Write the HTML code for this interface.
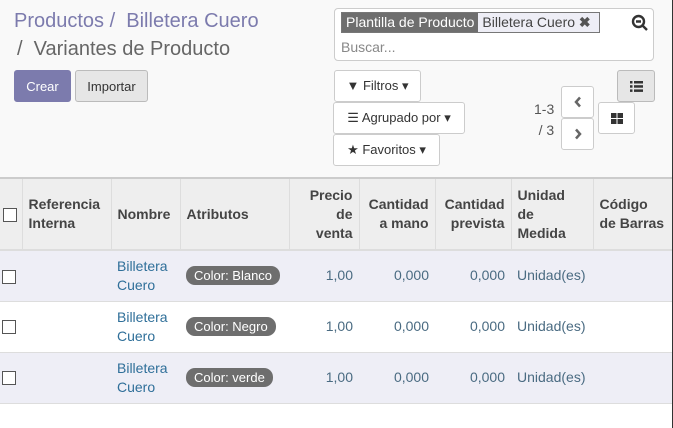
<!DOCTYPE html>
<html><head><meta charset="utf-8"><style>
*{box-sizing:border-box;margin:0;padding:0}
body{width:673px;height:428px;background:#fff;font-family:"Liberation Sans",Arial,sans-serif;font-size:13px;color:#4c4c4c;position:relative;overflow:hidden}
.cp{position:absolute;left:0;top:0;width:673px;height:177px;background:#f9f9f9}
.a{position:absolute}
.bc{font-size:20px;color:#7c7bad;left:14px;top:10px}
.bc2{font-size:20px;color:#666;left:17px;top:38px}
.btn{position:absolute;border:1px solid #ccc;border-radius:3px;background:#fff;font-size:13px;color:#333;display:flex;align-items:center;justify-content:center}
.sb{left:334px;top:8px;width:320px;height:53px;border:1px solid #ccc;border-radius:4px;background:#fff}
table{position:absolute;left:0;top:177px;border-collapse:collapse;width:673px;font-size:14px}
th{background:#eee;font-weight:bold;color:#444;height:72px;border-left:1px solid #ddd;border-top:2px solid #ccc;border-bottom:2px solid #ddd;padding:0 6px;line-height:19px;text-align:left}
td{height:51px;border-bottom:1px solid #ddd;padding:0 6px;line-height:19px;color:#4a6b82}
td.l{color:#2f6f99}
tr.o td{background:#eeeef6}
.r{text-align:right}
.cb{display:inline-block;width:14px;height:14px;border:1px solid #555;background:#fff;vertical-align:middle}
.tag{display:inline-block;background:#6e6e6e;color:#fff;border-radius:9px;padding:1px 8px;font-size:13px;line-height:17px}
</style></head><body>
<div class="cp"></div>
<div class="a bc">Productos / &nbsp;Billetera Cuero</div>
<div class="a bc2">/ &nbsp;Variantes de Producto</div>
<div class="btn" style="left:14px;top:70px;width:57px;height:32px;background:#7c7bad;border-color:#7c7bad;color:#fff">Crear</div>
<div class="btn" style="left:75px;top:70px;width:73px;height:32px;background:#e6e6e6;border-color:#bbb">Importar</div>
<div class="a sb"></div>
<div class="a" style="left:341px;top:12px;height:21px;width:259px;border:1px solid #777;background:#eeeef6;display:flex;font-size:14px">
<span style="background:#6e6e6e;color:#fff;padding:1px 4px">Plantilla de Producto</span><span style="color:#444;padding:1px 4px">Billetera Cuero <b style="color:#555">✖</b></span></div>
<div class="a" style="left:341px;top:39px;font-size:14px;color:#888">Buscar...</div>
<svg class="a" style="left:631px;top:14px" width="18" height="18" viewBox="0 0 18 18"><circle cx="7.5" cy="7.5" r="5.5" fill="none" stroke="#333" stroke-width="2.4"/><path d="M5 7.5h5M11.5 11.5l4.5 4.5" stroke="#333" stroke-width="2.4"/></svg>
<div class="btn" style="left:334px;top:70px;width:87px;height:32px">▼ Filtros ▾</div>
<div class="btn" style="left:333px;top:102px;width:132px;height:32px">☰ Agrupado por ▾</div>
<div class="btn" style="left:333px;top:134px;width:107px;height:32px">★ Favoritos ▾</div>
<div class="a" style="left:534px;top:99px;font-size:14px;color:#555;line-height:21px;text-align:right">1-3<br>/ 3</div>
<div class="btn" style="left:561px;top:86px;width:33px;height:32px"><svg width="8" height="12"><path d="M6 1.5L2 6l4 4.5" fill="none" stroke="#666" stroke-width="2.5"/></svg></div>
<div class="btn" style="left:561px;top:118px;width:33px;height:32px"><svg width="8" height="12"><path d="M2 1.5L6 6l-4 4.5" fill="none" stroke="#666" stroke-width="2.5"/></svg></div>
<div class="btn" style="left:617px;top:70px;width:38px;height:32px;background:#e6e6e6;border-color:#bbb"><svg width="13" height="11"><rect x="0" y="0" width="2.5" height="2.5" fill="#333"/><rect x="4" y="0" width="9" height="2.5" fill="#333"/><rect x="0" y="4.2" width="2.5" height="2.5" fill="#333"/><rect x="4" y="4.2" width="9" height="2.5" fill="#333"/><rect x="0" y="8.4" width="2.5" height="2.5" fill="#333"/><rect x="4" y="8.4" width="9" height="2.5" fill="#333"/></svg></div>
<div class="btn" style="left:598px;top:102px;width:37px;height:32px">
<svg width="12" height="11"><rect x="0" y="0" width="5.5" height="5" fill="#333"/><rect x="6.5" y="0" width="5.5" height="5" fill="#333"/><rect x="0" y="6" width="5.5" height="5" fill="#333"/><rect x="6.5" y="6" width="5.5" height="5" fill="#333"/></svg></div>
<table>
<tr><th style="width:22px;border-left:none;padding:0 3px"><span class="cb"></span></th><th style="width:89px">Referencia<br>Interna</th><th style="width:69px">Nombre</th><th style="width:109px">Atributos</th><th class="r" style="width:70px">Precio<br>de<br>venta</th><th class="r" style="width:76px">Cantidad<br>a mano</th><th class="r" style="width:76px">Cantidad<br>prevista</th><th style="width:82px">Unidad<br>de<br>Medida</th><th>Código<br>de Barras</th></tr>
<tr class="o"><td style="padding:0 2px"><span class="cb"></span></td><td></td><td class="l">Billetera<br>Cuero</td><td><span class="tag">Color: Blanco</span></td><td class="r">1,00</td><td class="r">0,000</td><td class="r">0,000</td><td>Unidad(es)</td><td></td></tr>
<tr><td style="padding:0 2px"><span class="cb"></span></td><td></td><td class="l">Billetera<br>Cuero</td><td><span class="tag">Color: Negro</span></td><td class="r">1,00</td><td class="r">0,000</td><td class="r">0,000</td><td>Unidad(es)</td><td></td></tr>
<tr class="o"><td style="padding:0 2px"><span class="cb"></span></td><td></td><td class="l">Billetera<br>Cuero</td><td><span class="tag">Color: verde</span></td><td class="r">1,00</td><td class="r">0,000</td><td class="r">0,000</td><td>Unidad(es)</td><td></td></tr>
</table>
<div class="a" style="left:672px;top:0;width:1px;height:428px;background:#333"></div>
</body></html>
